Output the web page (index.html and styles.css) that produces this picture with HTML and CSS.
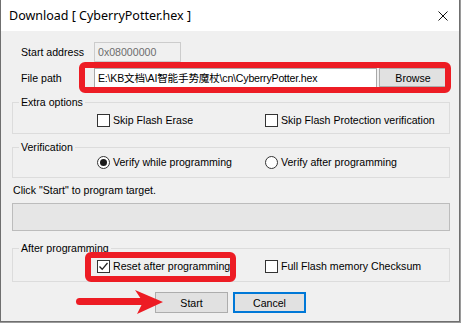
FILE: index.html
```html
<!DOCTYPE html>
<html>
<head>
<meta charset="utf-8">
<link rel="stylesheet" href="styles.css">
</head>
<body>
<div class="window">
  <div class="titlebar">
    <span class="title">Download [ CyberryPotter.hex ]</span>
    <svg class="close" width="10" height="10" viewBox="0 0 10 10"><path d="M0.5 0.5 L9.5 9.5 M9.5 0.5 L0.5 9.5" stroke="#111" stroke-width="1" fill="none"/></svg>
  </div>
  <div class="content">
    <div class="row row1">
      <span class="lbl">Start address</span>
      <div class="input addr">0x08000000</div>
    </div>
    <div class="row row2">
      <span class="lbl">File path</span>
      <div class="input path">E:\KB文档\AI智能手势魔杖\cn\CyberryPotter.hex</div>
      <div class="btn browse">Browse</div>
    </div>
    <fieldset class="group g1">
      <legend>Extra options</legend>
      <div class="opts">
        <span class="opt"><span class="cb"></span>Skip Flash Erase</span>
        <span class="opt"><span class="cb"></span>Skip Flash Protection verification</span>
      </div>
    </fieldset>
    <fieldset class="group g2">
      <legend>Verification</legend>
      <div class="opts">
        <span class="opt"><span class="rb on"></span>Verify while programming</span>
        <span class="opt"><span class="rb"></span>Verify after programming</span>
      </div>
    </fieldset>
    <div class="hint">Click "Start" to program target.</div>
    <div class="progress"></div>
    <fieldset class="group g3">
      <legend>After programming</legend>
      <div class="opts">
        <span class="opt"><span class="cb"><svg width="11" height="11" viewBox="0 0 11 11"><path d="M1.5 5.5 L4.2 8.3 L9.5 2" stroke="#222" stroke-width="1.3" fill="none"/></svg></span>Reset after programming</span>
        <span class="opt"><span class="cb"></span>Full Flash memory Checksum</span>
      </div>
    </fieldset>
    <div class="buttons">
      <div class="btn">Start</div>
      <div class="btn default">Cancel</div>
    </div>
  </div>
  <svg class="annot" width="461" height="323" viewBox="0 0 461 323">
    <rect x="82" y="65" width="366" height="25" rx="3" fill="none" stroke="#ed1c24" stroke-width="6"/>
    <rect x="88" y="255" width="145" height="24" rx="3" fill="none" stroke="#ed1c24" stroke-width="6"/>
    <line x1="79.5" y1="301.5" x2="142" y2="301.5" stroke="#ed1c24" stroke-width="7" stroke-linecap="round"/>
    <polygon points="135,290 163,302 137,314 143,302" fill="#ed1c24"/>
  </svg>
</div>
</body>
</html>
```
FILE: styles.css
```css
* { box-sizing: border-box; }
html { background: #9a9a9a; }
body {
  margin: 0;
  font-family: "Liberation Sans", Arial, sans-serif;
  font-size: 10.6px;
  color: #000;
}
.window {
  position: relative;
  width: 460px;
  height: 322px;
  background: #f0f0f0;
  border: 1px solid #6f6f6f;
  border-top: 0;
  display: flex;
  flex-direction: column;
}
.titlebar {
  height: 31px;
  flex: none;
  background: #fff;
  display: flex;
  align-items: center;
  justify-content: space-between;
  padding: 0 11px 0 8px;
}
.title {
  font-family: "Noto Sans", "Open Sans", sans-serif;
  font-size: 12.5px;
  color: #000;
}
.close { display: block; }
.content {
  padding: 11px 9px 0 11px;
  display: flex;
  flex-direction: column;
}
.row {
  display: flex;
  height: 20px;
  align-items: flex-start;
}
.row1 { margin-bottom: 6px; }
.lbl {
  width: 73px;
  margin-left: 9px;
  line-height: 20px;
}
.input {
  height: 20px;
  line-height: 18px;
  padding-left: 3px;
  border: 1px solid #a9a9a9;
  background: #fff;
  white-space: nowrap;
  overflow: hidden;
}
.addr {
  width: 87px;
  background: #f0f0f0;
  border-color: #cccccc;
  color: #6d6d6d;
}
.path {
  width: 283px;
  font-family: "Liberation Sans", "Noto Sans CJK SC", sans-serif;
  letter-spacing: -0.2px;
}
.btn {
  width: 73px;
  height: 21px;
  border: 1px solid #adadad;
  background: #e1e1e1;
  display: flex;
  align-items: center;
  justify-content: center;
}
.btn.default { border: 2px solid #0078d7; }
.browse {
  width: 68px;
  height: 19px;
  margin-left: 2px;
}
.group {
  margin: 0;
  padding: 0;
  border: 1px solid #dcdcdc;
  width: 438px;
  min-width: 0;
}
.group legend {
  margin-left: 6px;
  padding: 0 2px;
  line-height: 13px;
}
.g1 { margin-top: 8px; height: 38px; }
.g2 { margin-top: 7px; height: 37px; }
.g3 { margin-top: 11px; height: 40px; }
.opts {
  display: grid;
  grid-template-columns: 168px auto;
  padding-left: 84px;
  align-items: center;
}
.g1 .opts { height: 22px; }
.g2 .opts { height: 16px; }
.g3 .opts { height: 22px; }
.opt {
  display: flex;
  align-items: center;
  gap: 3px;
  white-space: nowrap;
}
.cb {
  width: 13px;
  height: 13px;
  border: 1px solid #333;
  background: #fff;
  display: flex;
  align-items: center;
  justify-content: center;
}
.cb svg { display: block; }
.rb {
  width: 13px;
  height: 13px;
  border: 1px solid #333;
  border-radius: 50%;
  background: #fff;
  display: flex;
  align-items: center;
  justify-content: center;
}
.rb.on::after {
  content: "";
  width: 7px;
  height: 7px;
  border-radius: 50%;
  background: #1a1a1a;
}
.hint {
  margin-top: 6px;
  line-height: 13px;
  padding-left: 1px;
}
.progress {
  margin-top: 6px;
  height: 28px;
  border: 1px solid #bcbcbc;
  background: #e6e6e6;
}
.buttons {
  margin-top: 10px;
  padding-left: 143px;
  display: flex;
  gap: 5px;
}
.annot {
  position: absolute;
  left: -1px;
  top: 0;
  pointer-events: none;
}
```
